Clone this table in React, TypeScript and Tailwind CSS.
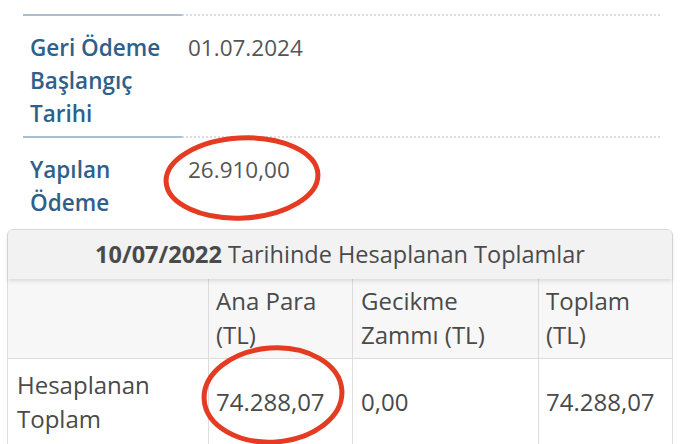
import React from 'react'

const font = { fontFamily: '"Open Sans", "Noto Sans", sans-serif' }

function InfoRow({ label, value }: { label: string[]; value: string }) {
  return (
    <div className="flex">
      <div className="w-[159px] border-t-2 border-[#a9bfd0] pt-[15px] pb-[6px] pl-[7px]">
        {label.map((l) => (
          <div key={l} className="text-[22.5px] leading-[33px] font-semibold text-[#2f6089]">
            {l}
          </div>
        ))}
      </div>
      <div className="w-[478px] border-t-2 border-dotted border-[#d8dde2] pt-[15px] pl-[6px]">
        <div className="text-[22.5px] leading-[33px] text-[#555]">{value}</div>
      </div>
    </div>
  )
}

export default function App() {
  const cols = 'grid grid-cols-[201px_144px_186px_134px]'
  const cell = 'px-[8px] text-[24px] leading-[34px] text-[#4a4a4a]'

  return (
    <div className="relative w-[680px] h-[444px] overflow-hidden bg-white" style={font}>
      <div className="pt-[14px] pl-[23px]">
        <InfoRow label={['Geri Ödeme', 'Başlangıç', 'Tarihi']} value="01.07.2024" />
        <InfoRow label={['Yapılan', 'Ödeme']} value="26.910,00" />
      </div>

      {/* Totals table */}
      <div className="mx-[7px] mt-[4px] border border-[#dcdcdc] rounded-t-[6px]">
        <div className="h-[49px] flex items-center justify-center bg-[#f2f2f2] rounded-t-[6px] shadow-[0_2px_4px_rgba(0,0,0,0.12)] relative z-10 text-[23.5px] text-[#4a4a4a]">
          <span className="font-bold">10/07/2022</span>
          <span className="ml-[6px]">Tarihinde Hesaplanan Toplamlar</span>
        </div>
        <div className={`${cols} h-[80px] bg-[#f7f7f7] border-b border-[#dcdcdc]`}>
          <div className="border-r border-[#dcdcdc]" />
          <div className={`${cell} border-r border-[#dcdcdc] pt-[5px] pl-[7px]`}>
            Ana Para<br />(TL)
          </div>
          <div className={`${cell} border-r border-[#dcdcdc] pt-[5px]`}>
            Gecikme<br />Zammı (TL)
          </div>
          <div className={`${cell} pt-[5px] pl-[7px]`}>
            Toplam<br />(TL)
          </div>
        </div>
        <div className={`${cols} h-[90px] bg-white`}>
          <div className={`${cell} border-r border-[#dcdcdc] flex flex-col justify-center pl-[9px] pb-[4px]`}>
            <span>Hesaplanan</span>
            <span>Toplam</span>
          </div>
          <div className={`${cell} border-r border-[#dcdcdc] flex items-center pb-[4px] pl-[7px]`}>74.288,07</div>
          <div className={`${cell} border-r border-[#dcdcdc] flex items-center pb-[4px]`}>0,00</div>
          <div className={`${cell} flex items-center pb-[4px] pl-[7px]`}>74.288,07</div>
        </div>
      </div>

      {/* Red hand-drawn markings */}
      <svg className="absolute inset-0 pointer-events-none z-20" width="680" height="444" viewBox="0 0 680 444">
        <ellipse cx="242" cy="178" rx="76" ry="40" fill="none" stroke="#e43b22" strokeWidth="5" transform="rotate(-3 242 178)" />
        <ellipse cx="273" cy="395" rx="69" ry="47" fill="none" stroke="#e43b22" strokeWidth="5" transform="rotate(-4 273 395)" />
      </svg>
    </div>
  )
}
